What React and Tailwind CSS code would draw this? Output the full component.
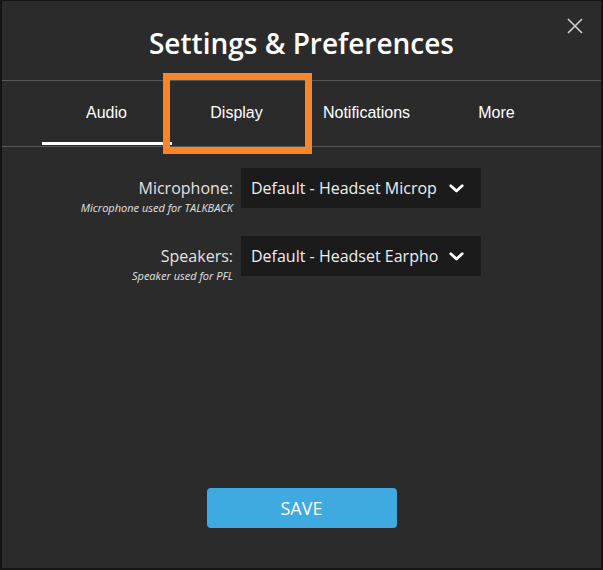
import { useState } from 'react';

const tabs = ['Audio', 'Display', 'Notifications', 'More'];

// the select text is cut at the box edge in the app, so only the visible part is kept
const devices = [
  { label: 'Microphone:', hint: 'Microphone used for TALKBACK', value: 'Default - Headset Microp' },
  { label: 'Speakers:', hint: 'Speaker used for PFL', value: 'Default - Headset Earpho' },
];

function Chevron() {
  return (
    <svg width="15" height="9" viewBox="0 0 15 9" className="shrink-0">
      <path d="M1.8 1.8 L7.5 7 L13.2 1.8" fill="none" stroke="#ffffff" strokeWidth="2.8" strokeLinecap="round" strokeLinejoin="round" />
    </svg>
  );
}

export default function App() {
  const [active, setActive] = useState('Audio');

  return (
    <div className="h-[570px] w-[603px] bg-[#141414] pl-[2px] pt-[1px]">
      <div className="relative flex h-[567px] w-[599px] flex-col bg-[#2b2b2b] font-['Open_Sans',sans-serif] text-white">
        <button className="absolute left-[565px] top-[17px] text-[#d0d0d0]">
          <svg width="16" height="16" viewBox="0 0 16 16">
            <path d="M1 1 L15 15 M15 1 L1 15" stroke="currentColor" strokeWidth="1.6" />
          </svg>
        </button>

        <div className="flex h-[80px] items-center justify-center border-b border-[#575757]">
          <h1 className="pt-[4px] text-[28px] font-semibold">Settings &amp; Preferences</h1>
        </div>

        <div className="flex justify-center border-b border-[#575757] pb-[1px]">
          {tabs.map((tab) => (
            <button
              key={tab}
              onClick={() => setActive(tab)}
              className={`flex h-[64px] w-[130px] items-center justify-center border-b-[3px] pt-[3px] font-['Liberation_Sans',Arial,sans-serif] text-[16px] ${
                active === tab ? 'border-white' : 'border-transparent'
              }`}
            >
              {tab}
            </button>
          ))}
        </div>

        <div className="pointer-events-none absolute left-[161px] top-[72px] h-[81px] w-[149px] border-[7px] border-[#f7862a]" />

        <div className="flex flex-col gap-[20px] pt-[21px]">
          {devices.map((d) => (
            <div key={d.label} className="flex">
              <div className="flex w-[231px] flex-col items-end pt-[8px] text-[#e2e2e2]">
                <span className="text-[16px] leading-[24px]">{d.label}</span>
                <span className="text-[11px] italic leading-[16px]">{d.hint}</span>
              </div>
              <div className="ml-[8px] flex h-[40px] w-[240px] items-center gap-[7px] bg-[#1b1b1b] pl-[10px] pr-[17px] text-[16px] text-[#efefef]">
                <span className="flex-1 overflow-hidden whitespace-nowrap">{d.value}</span>
                <Chevron />
              </div>
            </div>
          ))}
        </div>

        <div className="mb-[40px] mt-auto flex justify-center">
          <button className="h-[40px] w-[190px] rounded-[4px] bg-[#3fa9e1] text-[18px] text-white">SAVE</button>
        </div>
      </div>
    </div>
  );
}
